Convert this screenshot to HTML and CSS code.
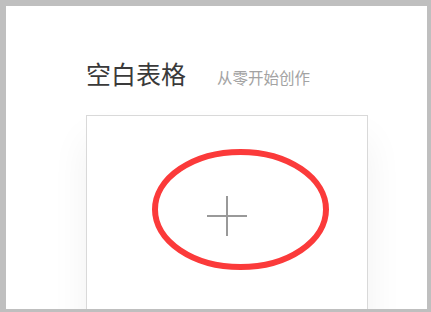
FILE: index.html
```html
<!DOCTYPE html>
<html lang="zh">
<head>
<meta charset="utf-8">
<link rel="stylesheet" href="styles.css">
</head>
<body>
<div class="frame">
  <div class="content">
    <div class="heading">
      <h1 class="title">空白表格</h1>
      <span class="subtitle">从零开始创作</span>
    </div>
    <div class="card">
      <div class="plus">
        <span class="plus-h"></span>
        <span class="plus-v"></span>
      </div>
      <svg class="mark" width="177" height="121" viewBox="0 0 177 121">
        <ellipse cx="88.5" cy="60.5" rx="85.5" ry="57.5" fill="none" stroke="#fb3a3a" stroke-width="6"/>
      </svg>
    </div>
  </div>
</div>
</body>
</html>
```
FILE: styles.css
```css
html, body {
  margin: 0;
  padding: 0;
  background: #bfbfbf;
  height: 312px;
  overflow: hidden;
}
.frame {
  margin: 6px 4px 0 6px;
  height: 303px;
  background: #ffffff;
  overflow: hidden;
  font-family: "Noto Sans CJK SC", "Noto Sans", sans-serif;
}
.content {
  padding: 52px 0 0 80px;
}
.heading {
  display: flex;
  align-items: baseline;
  gap: 31px;
  height: 57px;
}
.title {
  margin: 0;
  font-size: 25px;
  font-weight: 400;
  line-height: 1.2;
  color: #3a3a3a;
}
.subtitle {
  font-size: 15.5px;
  color: #a3a3a3;
}
.card {
  position: relative;
  box-sizing: border-box;
  width: 282px;
  height: 240px;
  border: 1px solid #d9d9d9;
  background: #fff;
  box-shadow: 0 24px 36px rgba(0, 0, 0, 0.06);
  display: flex;
  justify-content: center;
  padding-top: 80px;
}
.plus {
  position: relative;
  width: 40px;
  height: 40px;
}
.plus-h {
  position: absolute;
  left: 0;
  top: 19px;
  width: 40px;
  height: 2px;
  background: #999999;
}
.plus-v {
  position: absolute;
  left: 19px;
  top: 0;
  width: 2px;
  height: 40px;
  background: #999999;
}
.mark {
  position: absolute;
  left: 65px;
  top: 33px;
}
```
